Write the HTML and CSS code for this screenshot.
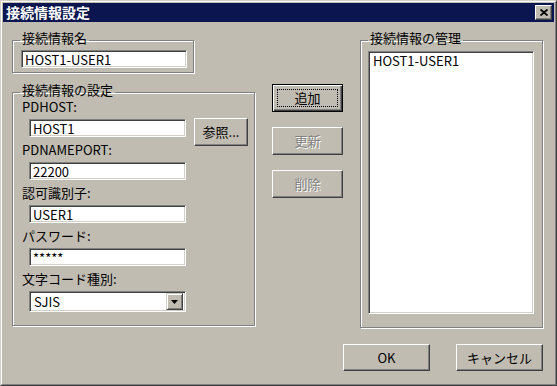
FILE: index.html
```html
<!DOCTYPE html>
<html lang="ja">
<head>
    <meta charset="UTF-8">
    <title>接続情報設定</title>
    <link rel="stylesheet" href="styles.css">
</head>
<body>
<div class="window">
  <div class="frame">
    <div class="titlebar">
        <span class="title">接続情報設定</span>
        <span class="close">
            <svg width="8" height="7" viewBox="0 0 8 7"><path d="M0.5 0.5 L7.5 6.5 M7.5 0.5 L0.5 6.5" stroke="#000" stroke-width="1.8" fill="none"/></svg>
        </span>
    </div>

    <div class="client">
        <div class="main">
            <div class="left">
                <fieldset class="group group-name">
                    <legend>接続情報名</legend>
                    <input class="field name-field" type="text" value="HOST1-USER1">
                </fieldset>

                <fieldset class="group group-settings">
                    <legend>接続情報の設定</legend>
                    <div class="form">
                        <label class="lbl first">PDHOST:</label>
                        <input class="field" type="text" value="HOST1">
                        <button class="btn browse">参照...</button>

                        <label class="lbl">PDNAMEPORT:</label>
                        <input class="field" type="text" value="22200">

                        <label class="lbl">認可識別子:</label>
                        <input class="field" type="text" value="USER1">

                        <label class="lbl">パスワード:</label>
                        <input class="field" type="text" value="*****">

                        <label class="lbl">文字コード種別:</label>
                        <div class="combo">
                            <span class="combo-text">SJIS</span>
                            <span class="combo-arrow">
                                <svg width="7" height="4" viewBox="0 0 7 4"><polygon points="0,0 7,0 3.5,4" fill="#000"/></svg>
                            </span>
                        </div>
                    </div>
                </fieldset>
            </div>

            <div class="actions">
                <button class="btn action default"><span>追加</span></button>
                <button class="btn action" disabled>更新</button>
                <button class="btn action" disabled>削除</button>
            </div>

            <fieldset class="group group-list">
                <legend>接続情報の管理</legend>
                <div class="listbox">
                    <div class="item">HOST1-USER1</div>
                </div>
            </fieldset>
        </div>

        <div class="footer">
            <button class="btn footer-btn">OK</button>
            <button class="btn footer-btn">キャンセル</button>
        </div>
    </div>
  </div>
</div>
</body>
</html>
```

FILE: styles.css
```css
* {
    box-sizing: border-box;
}
body {
    margin: 0;
    font-family: "Noto Sans CJK JP", "Liberation Sans", sans-serif;
    font-size: 13px;
    color: #000;
    background: #c0bcb2;
}
.window {
    width: 557px;
    height: 386px;
    border: 1px solid;
    border-color: #d4d0c8 #404040 #404040 #d4d0c8;
    background: #c0bcb2;
}
.frame {
    height: 100%;
    border: 1px solid;
    border-color: #fff #808080 #808080 #fff;
    padding: 1px;
    display: flex;
    flex-direction: column;
}
.titlebar {
    height: 19px;
    background: #0b1650;
    color: #fff;
    display: flex;
    align-items: center;
    justify-content: space-between;
    padding: 0 2px 0 3px;
}
.title {
    font-weight: bold;
    font-size: 14px;
    line-height: 19px;
}
.close {
    width: 17px;
    height: 15px;
    background: #c0bcb2;
    border: 1px solid;
    border-color: #fff #404040 #404040 #fff;
    box-shadow: inset -1px -1px #808080;
    display: flex;
    align-items: center;
    justify-content: center;
}
.client {
    flex: 1;
    padding: 8px 11px 0 9px;
}
.main {
    display: flex;
    align-items: flex-start;
    gap: 17px;
}
.left {
    width: 243px;
    display: flex;
    flex-direction: column;
    gap: 9px;
}

/* group boxes */
.group {
    margin: 0;
    padding: 0;
    min-width: 0;
    border: 1px solid #808080;
    box-shadow: inset 1px 1px #fff, 1px 1px #fff;
}
.group legend {
    margin-left: 7px;
    padding: 0 2px 5px;
    line-height: 15px;
}
.group-name {
    width: 182px;
}
.group-list {
    width: 183px;
}

/* sunken fields */
.field, .combo, .listbox {
    background: #fff;
    border: 1px solid;
    border-color: #808080 #fff #fff #808080;
    box-shadow: inset 1px 1px #404040, inset -1px -1px #d4d0c8;
}
.field {
    display: block;
    width: 157px;
    height: 18px;
    padding: 0 3px;
    margin: 0;
    font: inherit;
    line-height: 16px;
    color: #000;
    outline: none;
}
.name-field {
    width: 166px;
    margin: 0 0 4px 8px;
}

.form {
    display: grid;
    grid-template-columns: 157px 54px;
    column-gap: 8px;
    align-items: start;
    padding: 0 0 13px 16px;
}
.form > .lbl, .form > .field, .form > .combo {
    grid-column: 1;
}
.lbl {
    display: block;
    margin: 5px 0 5px -7px;
    line-height: 15px;
    white-space: nowrap;
}
.lbl.first {
    margin-top: -3px;
}
.browse {
    grid-column: 2;
    grid-row: 2 / span 2;
    height: 28px;
    margin-top: -1px;
}

.combo {
    width: 157px;
    height: 21px;
    display: flex;
    align-items: center;
    justify-content: space-between;
    padding: 2px;
}
.combo-text {
    padding-left: 2px;
    line-height: 16px;
}
.combo-arrow {
    width: 17px;
    height: 17px;
    background: #c0bcb2;
    border: 1px solid;
    border-color: #d4d0c8 #404040 #404040 #d4d0c8;
    box-shadow: inset 1px 1px #fff, inset -1px -1px #808080;
    display: flex;
    align-items: center;
    justify-content: center;
}

.listbox {
    width: 166px;
    height: 263px;
    margin: 1px 0 13px 7px;
    padding: 2px;
}
.item {
    line-height: 14px;
    padding-left: 2px;
}

/* buttons */
.btn {
    font: inherit;
    color: #000;
    background: #c0bcb2;
    border: 1px solid;
    border-color: #fff #404040 #404040 #fff;
    box-shadow: inset -1px -1px #808080;
    padding: 0;
    line-height: 16px;
}
.btn:disabled {
    color: #808080;
    text-shadow: 1px 1px #fff;
}
.actions {
    margin-top: 54px;
    display: flex;
    flex-direction: column;
    gap: 15px;
}
.action {
    width: 71px;
    height: 28px;
}
.btn.default {
    position: relative;
    border-color: #000;
    box-shadow: inset 1px 1px #fff, inset -1px -1px #404040, inset -2px -2px #808080;
}
.btn.default::after {
    content: "";
    position: absolute;
    inset: 4px;
    border: 1px dotted #000;
}
.footer {
    display: flex;
    justify-content: flex-end;
    gap: 26px;
    margin-top: 16px;
}
.footer-btn {
    width: 87px;
    height: 27px;
}
```
